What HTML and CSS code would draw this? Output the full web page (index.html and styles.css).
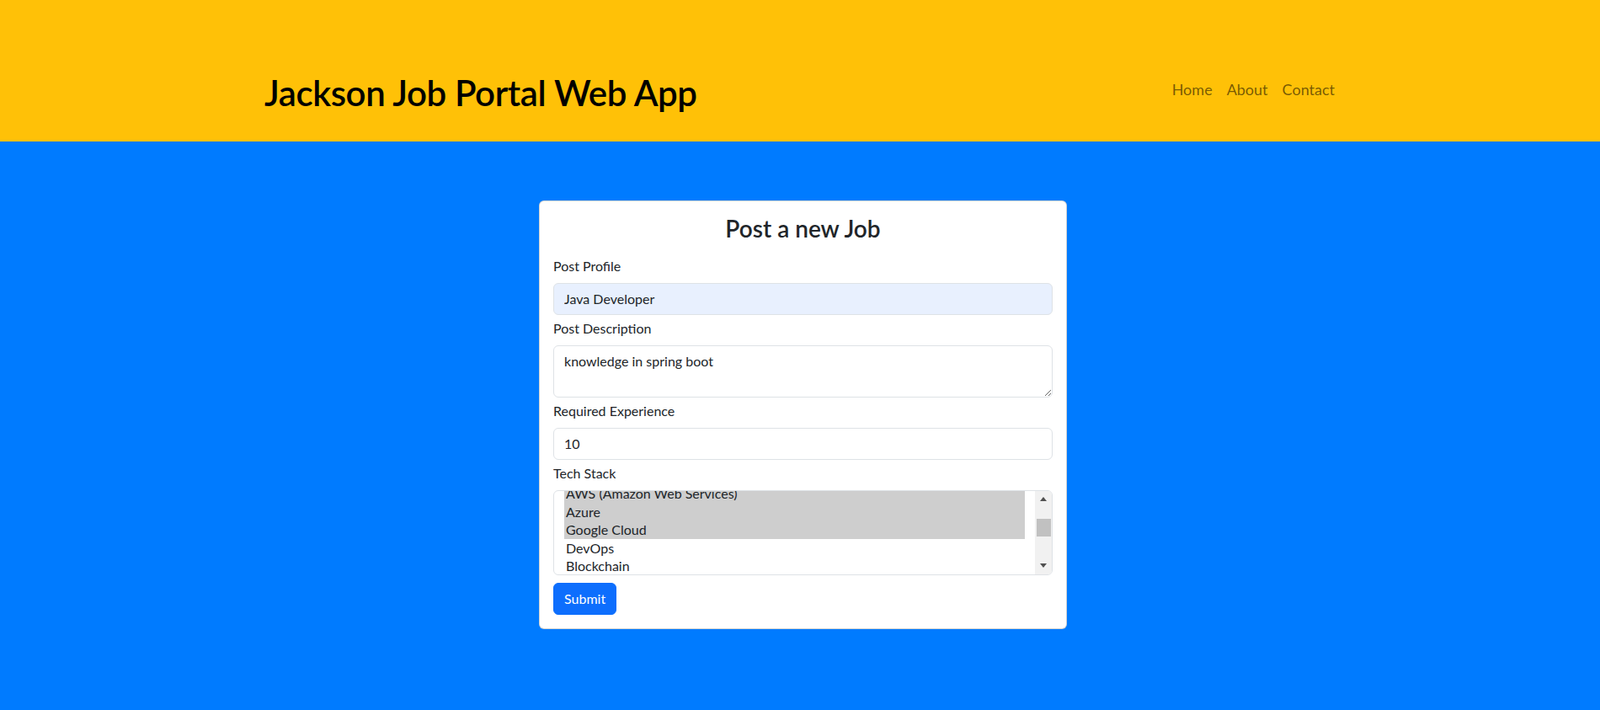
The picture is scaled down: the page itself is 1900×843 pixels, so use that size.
FILE: index.html
```html
<!DOCTYPE html>
<html lang="en">
<head>
<meta charset="utf-8">
<title>Jackson Job Portal Web App</title>
<link rel="stylesheet" href="styles.css">
</head>
<body>
<header class="topbar">
  <div class="bar">
    <h1 class="brand">Jackson Job Portal Web App</h1>
    <nav class="menu">
      <a href="#">Home</a>
      <a href="#">About</a>
      <a href="#">Contact</a>
    </nav>
  </div>
</header>
<main class="page">
  <form class="card">
    <h3 class="card-title">Post a new Job</h3>
    <div class="field">
      <label>Post Profile</label>
      <input class="control autofill" type="text" value="Java Developer">
    </div>
    <div class="field">
      <label>Post Description</label>
      <textarea class="control area" rows="2">knowledge in spring boot</textarea>
    </div>
    <div class="field">
      <label>Required Experience</label>
      <input class="control" type="text" value="10">
    </div>
    <div class="field">
      <label>Tech Stack</label>
      <div class="listbox">
        <div class="options">
          <div class="opt sel first">AWS (Amazon Web Services)</div>
          <div class="opt sel">Azure</div>
          <div class="opt sel">Google Cloud</div>
          <div class="opt">DevOps</div>
          <div class="opt">Blockchain</div>
        </div>
        <div class="scrollbar">
          <span class="arrow up"></span>
          <span class="track"><span class="thumb"></span></span>
          <span class="arrow down"></span>
        </div>
      </div>
    </div>
    <button class="btn" type="button">Submit</button>
  </form>
</main>
</body>
</html>
```
FILE: styles.css
```css
html, body {
  margin: 0;
  padding: 0;
}
body {
  background: #007bff;
  font-family: Lato, "Open Sans", sans-serif;
  color: #212529;
  min-height: 843px;
}
.topbar {
  background: #ffc107;
  height: 168px;
  box-sizing: border-box;
  padding-top: 52px;
}
.bar {
  max-width: 1272px;
  margin: 0 auto;
  height: 116px;
  display: flex;
  align-items: center;
  justify-content: space-between;
}
.brand {
  margin: 0;
  font-size: 42px;
  line-height: 52px;
  font-weight: 600;
  letter-spacing: -0.4px;
  color: #000;
}
.menu {
  display: flex;
  gap: 17px;
  margin-bottom: 8px;
  margin-right: 1px;
}
.menu a {
  font-size: 18px;
  line-height: 24px;
  color: rgba(0, 0, 0, 0.55);
  text-decoration: none;
}
.card {
  width: 627px;
  box-sizing: border-box;
  margin: 70px 0 0 calc(50% - 310px);
  background: #fff;
  border: 1px solid rgba(0, 0, 0, 0.175);
  border-radius: 6px;
  padding: 16px;
}
.card-title {
  margin: 0 0 15px;
  font-size: 28px;
  line-height: 33.6px;
  font-weight: 600;
  text-align: center;
  color: #212529;
}
.field {
  margin-bottom: 4px;
}
.field label {
  display: block;
  font-size: 16px;
  line-height: 24px;
  margin-bottom: 8px;
}
.control {
  display: block;
  width: 100%;
  box-sizing: border-box;
  padding: 6px 12px;
  font-family: inherit;
  font-size: 16px;
  line-height: 24px;
  color: #212529;
  background: #fff;
  border: 1px solid #dee2e6;
  border-radius: 6px;
  margin: 0;
}
.autofill {
  background: #e8f0fe;
}
.area {
  height: 62px;
  resize: vertical;
}
.listbox {
  height: 101px;
  box-sizing: border-box;
  border: 1px solid #dee2e6;
  border-radius: 6px;
  display: flex;
  overflow: hidden;
  background: #fff;
}
.options {
  flex: 1;
  overflow: hidden;
  padding: 0 12px;
}
.opt {
  padding: 0 2px;
  height: 21.5px;
  line-height: 21.5px;
  font-size: 16px;
  white-space: nowrap;
}
.opt.first {
  margin-top: -7.5px;
}
.sel {
  background: #cecece;
}
.scrollbar {
  width: 20px;
  background: #f1f1f1;
  display: flex;
  flex-direction: column;
}
.arrow {
  height: 20px;
  display: flex;
  align-items: center;
  justify-content: center;
}
.arrow::before {
  content: "";
  width: 0;
  height: 0;
  border-left: 4.5px solid transparent;
  border-right: 4.5px solid transparent;
}
.up::before {
  border-bottom: 5px solid #505050;
}
.down::before {
  border-top: 5px solid #505050;
}
.track {
  flex: 1;
}
.thumb {
  display: block;
  margin: 13px 1px 0 2px;
  height: 21px;
  background: #c1c1c1;
}
.btn {
  display: block;
  margin-top: 9px;
  padding: 6px 12px;
  font-family: inherit;
  font-size: 16px;
  line-height: 24px;
  color: #fff;
  background: #0d6efd;
  border: 1px solid #0d6efd;
  border-radius: 6px;
  cursor: pointer;
}
```
